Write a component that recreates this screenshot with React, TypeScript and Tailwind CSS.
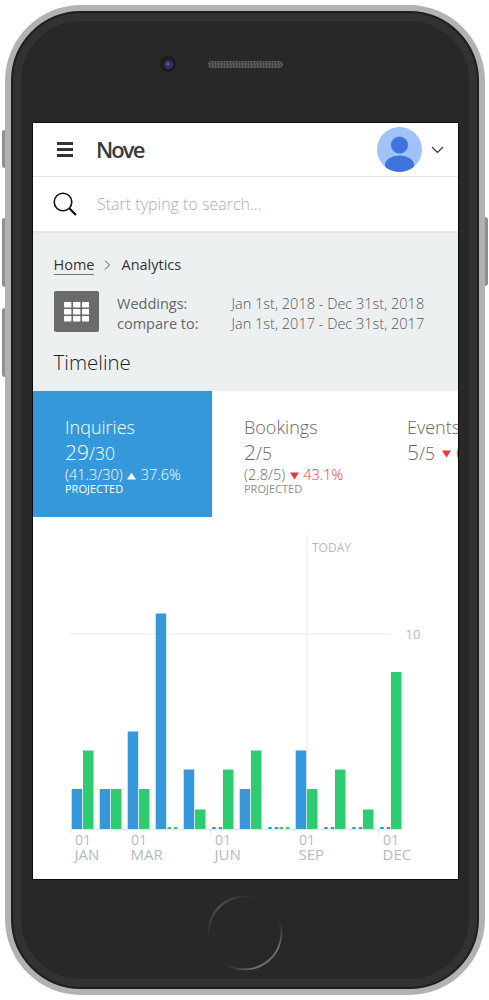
import React from 'react';

const BLUE = '#3498db';
const GREEN = '#2ecc71';
const BASE = 829;

// bar tops for each month, null means the value is zero (drawn as two dashes)
const bars: [number | null, number | null][] = [
    [789, 750.5],
    [789, 789],
    [731.5, 789],
    [613.5, null],
    [769.5, 809.5],
    [null, 769.5],
    [789, 750.5],
    [null, null],
    [750.5, 789],
    [null, 769.5],
    [null, 809.5],
    [null, 672],
];

const ticks = [
    { x: 71, label: 'JAN', textX: 75 },
    { x: 126.5, label: 'MAR', textX: 131 },
    { x: 210.5, label: 'JUN', textX: 215 },
    { x: 294.5, label: 'SEP', textX: 299 },
    { x: 378.5, label: 'DEC', textX: 383 },
];

function Bar({ x, top, color }: { x: number; top: number | null; color: string }) {
    if (top === null) {
        return (
            <g fill={color}>
                <rect x={x + 0.5} y={BASE - 2} width={3.5} height={2} />
                <rect x={x + 7} y={BASE - 2} width={3.5} height={2} />
            </g>
        );
    }
    return <rect x={x} y={top} width={10.5} height={BASE - top} fill={color} />;
}

function Chart() {
    return (
        <svg viewBox="33 517 425 362" width={425} height={362} className="block" style={{ fontFamily: '"Open Sans", sans-serif' }}>
            <line x1={69.5} y1={634} x2={391} y2={634} stroke="#f0f1f2" strokeWidth={1.5} />
            <line x1={306.7} y1={535} x2={306.7} y2={829} stroke="#f0f1f2" strokeWidth={1.5} />
            <text x={312} y={552} fontSize={12} fill="#b5b9bf">TODAY</text>
            <text x={405.5} y={639} fontSize={13} fill="#b5b9bf">10</text>
            {bars.map(([blue, green], i) => (
                <g key={i}>
                    <Bar x={71.7 + i * 28} top={blue} color={BLUE} />
                    <Bar x={83 + i * 28} top={green} color={GREEN} />
                </g>
            ))}
            <line x1={70} y1={829.5} x2={403} y2={829.5} stroke="#e2e4e6" strokeWidth={1} />
            {ticks.map(t => (
                <g key={t.label}>
                    <line x1={t.x} y1={829} x2={t.x} y2={833} stroke="#dfe1e4" strokeWidth={1} />
                    <text x={t.textX} y={844.5} fontSize={14} fill="#b5b9bf">01</text>
                    <text x={t.textX - 0.5} y={860} fontSize={15} fill="#b5b9bf">{t.label}</text>
                </g>
            ))}
        </svg>
    );
}

function Avatar() {
    return (
        <svg width={45} height={45} viewBox="0 0 45 45" className="block">
            <defs>
                <clipPath id="avatar-clip">
                    <circle cx={22.5} cy={22.5} r={22.5} />
                </clipPath>
            </defs>
            <circle cx={22.5} cy={22.5} r={22.5} fill="#9fc2fb" />
            <g clipPath="url(#avatar-clip)" fill="#3f74dc">
                <circle cx={22.5} cy={18} r={8.6} />
                <ellipse cx={22.5} cy={38} rx={14.5} ry={9.5} />
            </g>
        </svg>
    );
}

function HomeButton() {
    return (
        <svg width={76} height={76} viewBox="0 0 76 76" className="block">
            <defs>
                <linearGradient id="ring-a" gradientUnits="userSpaceOnUse" x1={70} y1={22} x2={16} y2={67}>
                    <stop offset="0" stopColor="#707070" stopOpacity={0} />
                    <stop offset="0.25" stopColor="#707070" />
                    <stop offset="0.75" stopColor="#707070" />
                    <stop offset="1" stopColor="#707070" stopOpacity={0} />
                </linearGradient>
                <linearGradient id="ring-b" gradientUnits="userSpaceOnUse" x1={2} y1={45} x2={50} y2={3.5}>
                    <stop offset="0" stopColor="#555" stopOpacity={0} />
                    <stop offset="0.45" stopColor="#585858" />
                    <stop offset="1" stopColor="#555" stopOpacity={0} />
                </linearGradient>
            </defs>
            <path d="M70.6 21.7 A36.5 36.5 0 0 1 16.4 67.4" fill="none" stroke="url(#ring-a)" strokeWidth={1.8} />
            <path d="M2.2 45.5 A36.5 36.5 0 0 1 50 3.5" fill="none" stroke="url(#ring-b)" strokeWidth={1.8} />
        </svg>
    );
}

function Arrow({ up, color, className }: { up?: boolean; color: string; className: string }) {
    return (
        <svg width={9} height={8} viewBox="0 0 9 8" className={`shrink-0 ${className}`}>
            <path d={up ? 'M4.5 0.5 L9 7.5 L0 7.5 Z' : 'M0 0.5 L9 0.5 L4.5 7.5 Z'} fill={color} />
        </svg>
    );
}

function Tab({ title, value, total, projected, delta, up, active, className }: {
    title: string;
    value: string;
    total: string;
    projected?: string;
    delta: string;
    up?: boolean;
    active?: boolean;
    className: string;
}) {
    const deltaColor = active ? 'text-white' : 'text-[#e53935]';
    const arrowColor = active ? '#fff' : '#e53935';
    return (
        <div className={className}>
            <div className="text-[18px] leading-[26px] font-light">{title}</div>
            <div className="flex h-[26px] items-center whitespace-nowrap font-light">
                <span className="text-[21px]">{value}</span>
                <span className="text-[17.5px]">/{total}</span>
                {!projected && (
                    <>
                        <Arrow up={up} color={arrowColor} className="ml-[7px] mr-[5px] mt-[2px]" />
                        <span className={`text-[18px] ${deltaColor}`}>{delta}</span>
                    </>
                )}
            </div>
            {projected && (
                <>
                    <div className="flex h-[17px] items-center whitespace-nowrap font-light">
                        <span className="text-[14.5px]">{projected}</span>
                        <Arrow up={up} color={arrowColor} className="ml-[4.5px] mr-[4.5px] mt-[2px]" />
                        <span className={`text-[14.5px] ${deltaColor}`}>{delta}</span>
                    </div>
                    <div className={`text-[11px] leading-[12px] ${active ? 'text-white' : 'text-[#8c8c8c]'}`}>PROJECTED</div>
                </>
            )}
        </div>
    );
}

export default function App() {
    return (
        <div className="h-[1000px] w-[489px] overflow-hidden bg-white pl-[5px] pt-[5px]" style={{ fontFamily: '"Open Sans", sans-serif' }}>
            <div className="relative h-[990px] w-[480px] rounded-[76px] bg-[#b2b2b2] p-[6px]">
                {/* side buttons */}
                <div className="absolute left-[-3px] top-[125px] h-[38px] w-[3px] rounded-l-sm bg-[#8e8e93]" />
                <div className="absolute left-[-3px] top-[213px] h-[69px] w-[3px] rounded-l-sm bg-[#8e8e93]" />
                <div className="absolute left-[-3px] top-[303px] h-[69px] w-[3px] rounded-l-sm bg-[#8e8e93]" />
                <div className="absolute right-[-3px] top-[212px] h-[69px] w-[3px] rounded-r-sm bg-[#8e8e93]" />

                <div className="h-full rounded-[70px] border-2 border-[#1e1e1e] bg-[#323232] p-[8px]">
                    <div className="h-full rounded-[60px] bg-[#282828] pt-[35px]">
                        <div className="flex h-4 items-center pl-[139px]">
                            <div className="flex h-4 w-4 items-center justify-center rounded-full bg-[#1c1c1e]">
                                <div className="flex h-[9px] w-[9px] items-center justify-center rounded-full bg-[#3a2f66]">
                                    <div className="h-[2px] w-[2px] rounded-full bg-[#8f88a8]" />
                                </div>
                            </div>
                            <div className="ml-[32px] h-[7px] w-[75px] rounded-full bg-[repeating-conic-gradient(#5c5c5c_0_25%,#3a3a3a_0_50%)] bg-[length:3px_3px]" />
                        </div>

                        <div className="ml-[12px] mt-[51px] h-[756px] w-[425px] overflow-hidden bg-white text-[#333] ring-1 ring-black/70">
                            <div className="flex h-[54px] items-center border-b border-[#dfe3e5]">
                                <div className="ml-[24px] flex w-4 flex-col gap-[3.5px]">
                                    <div className="h-[2.5px] bg-[#333]" />
                                    <div className="h-[2.5px] bg-[#333]" />
                                    <div className="h-[2.5px] bg-[#333]" />
                                </div>
                                <div className="ml-[23px] text-[22px] font-semibold tracking-[-1.9px] text-[#3a3a3a]">Nove</div>
                                <div className="ml-auto"><Avatar /></div>
                                <svg width={13} height={8} viewBox="0 0 13 8" className="ml-[9px] mr-[14px]">
                                    <path d="M1 1 L6.5 6.5 L12 1" fill="none" stroke="#333" strokeWidth={1.2} />
                                </svg>
                            </div>

                            <div className="flex h-[56px] items-center border-b-2 border-[#e4e7e9]">
                                <svg width={25} height={25} viewBox="0 0 25 25" className="ml-[20px]">
                                    <circle cx={10} cy={10} r={8.8} fill="none" stroke="#111" strokeWidth={1.6} />
                                    <path d="M16.5 16.5 L23 23" stroke="#111" strokeWidth={2.2} />
                                </svg>
                                <div className="ml-[19px] text-[16px] font-light text-[#a9aeb3]">Start typing to search...</div>
                            </div>

                            <div className="h-[158px] bg-[#edf0f1] pl-[20.5px] pt-[22px]">
                                <div className="flex h-5 items-center text-[14.5px] leading-5">
                                    <span className="border-b border-[#777] leading-[18px]">Home</span>
                                    <svg width={7} height={10} viewBox="0 0 7 10" className="ml-[10px] mr-[10px]">
                                        <path d="M1 0.5 L5.5 5 L1 9.5" fill="none" stroke="#555" strokeWidth={1} />
                                    </svg>
                                    <span>Analytics</span>
                                </div>
                                <div className="mt-[16px] flex items-start">
                                    <div className="flex h-[41px] w-[45px] items-center justify-center rounded-[2px] bg-[#6b6b6b]">
                                        <svg width={25} height={20} viewBox="0 0 25 20">
                                            <g fill="#fff">
                                                {[0, 7, 14].map(y => [0, 9, 18].map(x => (
                                                    <rect key={`${x}-${y}`} x={x} y={y} width={7.4} height={5.6} rx={0.8} />
                                                )))}
                                            </g>
                                        </svg>
                                    </div>
                                    <div className="ml-[18.5px] mt-[2.5px] w-[114.5px] text-[14.5px] leading-[20px] text-[#666]">
                                        <div>Weddings:</div>
                                        <div>compare to:</div>
                                    </div>
                                    <div className="mt-[2.5px] whitespace-nowrap text-[14.5px] font-light leading-[20px] text-[#555]">
                                        <div>Jan 1st, 2018 - Dec 31st, 2018</div>
                                        <div>Jan 1st, 2017 - Dec 31st, 2017</div>
                                    </div>
                                </div>
                                <div className="mt-[14.5px] text-[20.5px] font-light leading-[28px] text-[#222]">Timeline</div>
                            </div>

                            <div className="flex h-[126px]">
                                <Tab
                                    className="w-[179px] shrink-0 bg-[#3498db] pl-[32px] pt-[23px] text-white"
                                    title="Inquiries"
                                    value="29"
                                    total="30"
                                    projected="(41.3/30)"
                                    delta="37.6%"
                                    up
                                    active
                                />
                                <Tab
                                    className="w-[195px] shrink-0 pl-[32px] pt-[23px] text-[#666]"
                                    title="Bookings"
                                    value="2"
                                    total="5"
                                    projected="(2.8/5)"
                                    delta="43.1%"
                                />
                                <Tab
                                    className="shrink-0 pt-[23px] text-[#666]"
                                    title="Events"
                                    value="5"
                                    total="5"
                                    delta="0%"
                                />
                            </div>

                            <Chart />
                        </div>

                        <div className="ml-[186px] mt-[16px]"><HomeButton /></div>
                    </div>
                </div>
            </div>
        </div>
    );
}
